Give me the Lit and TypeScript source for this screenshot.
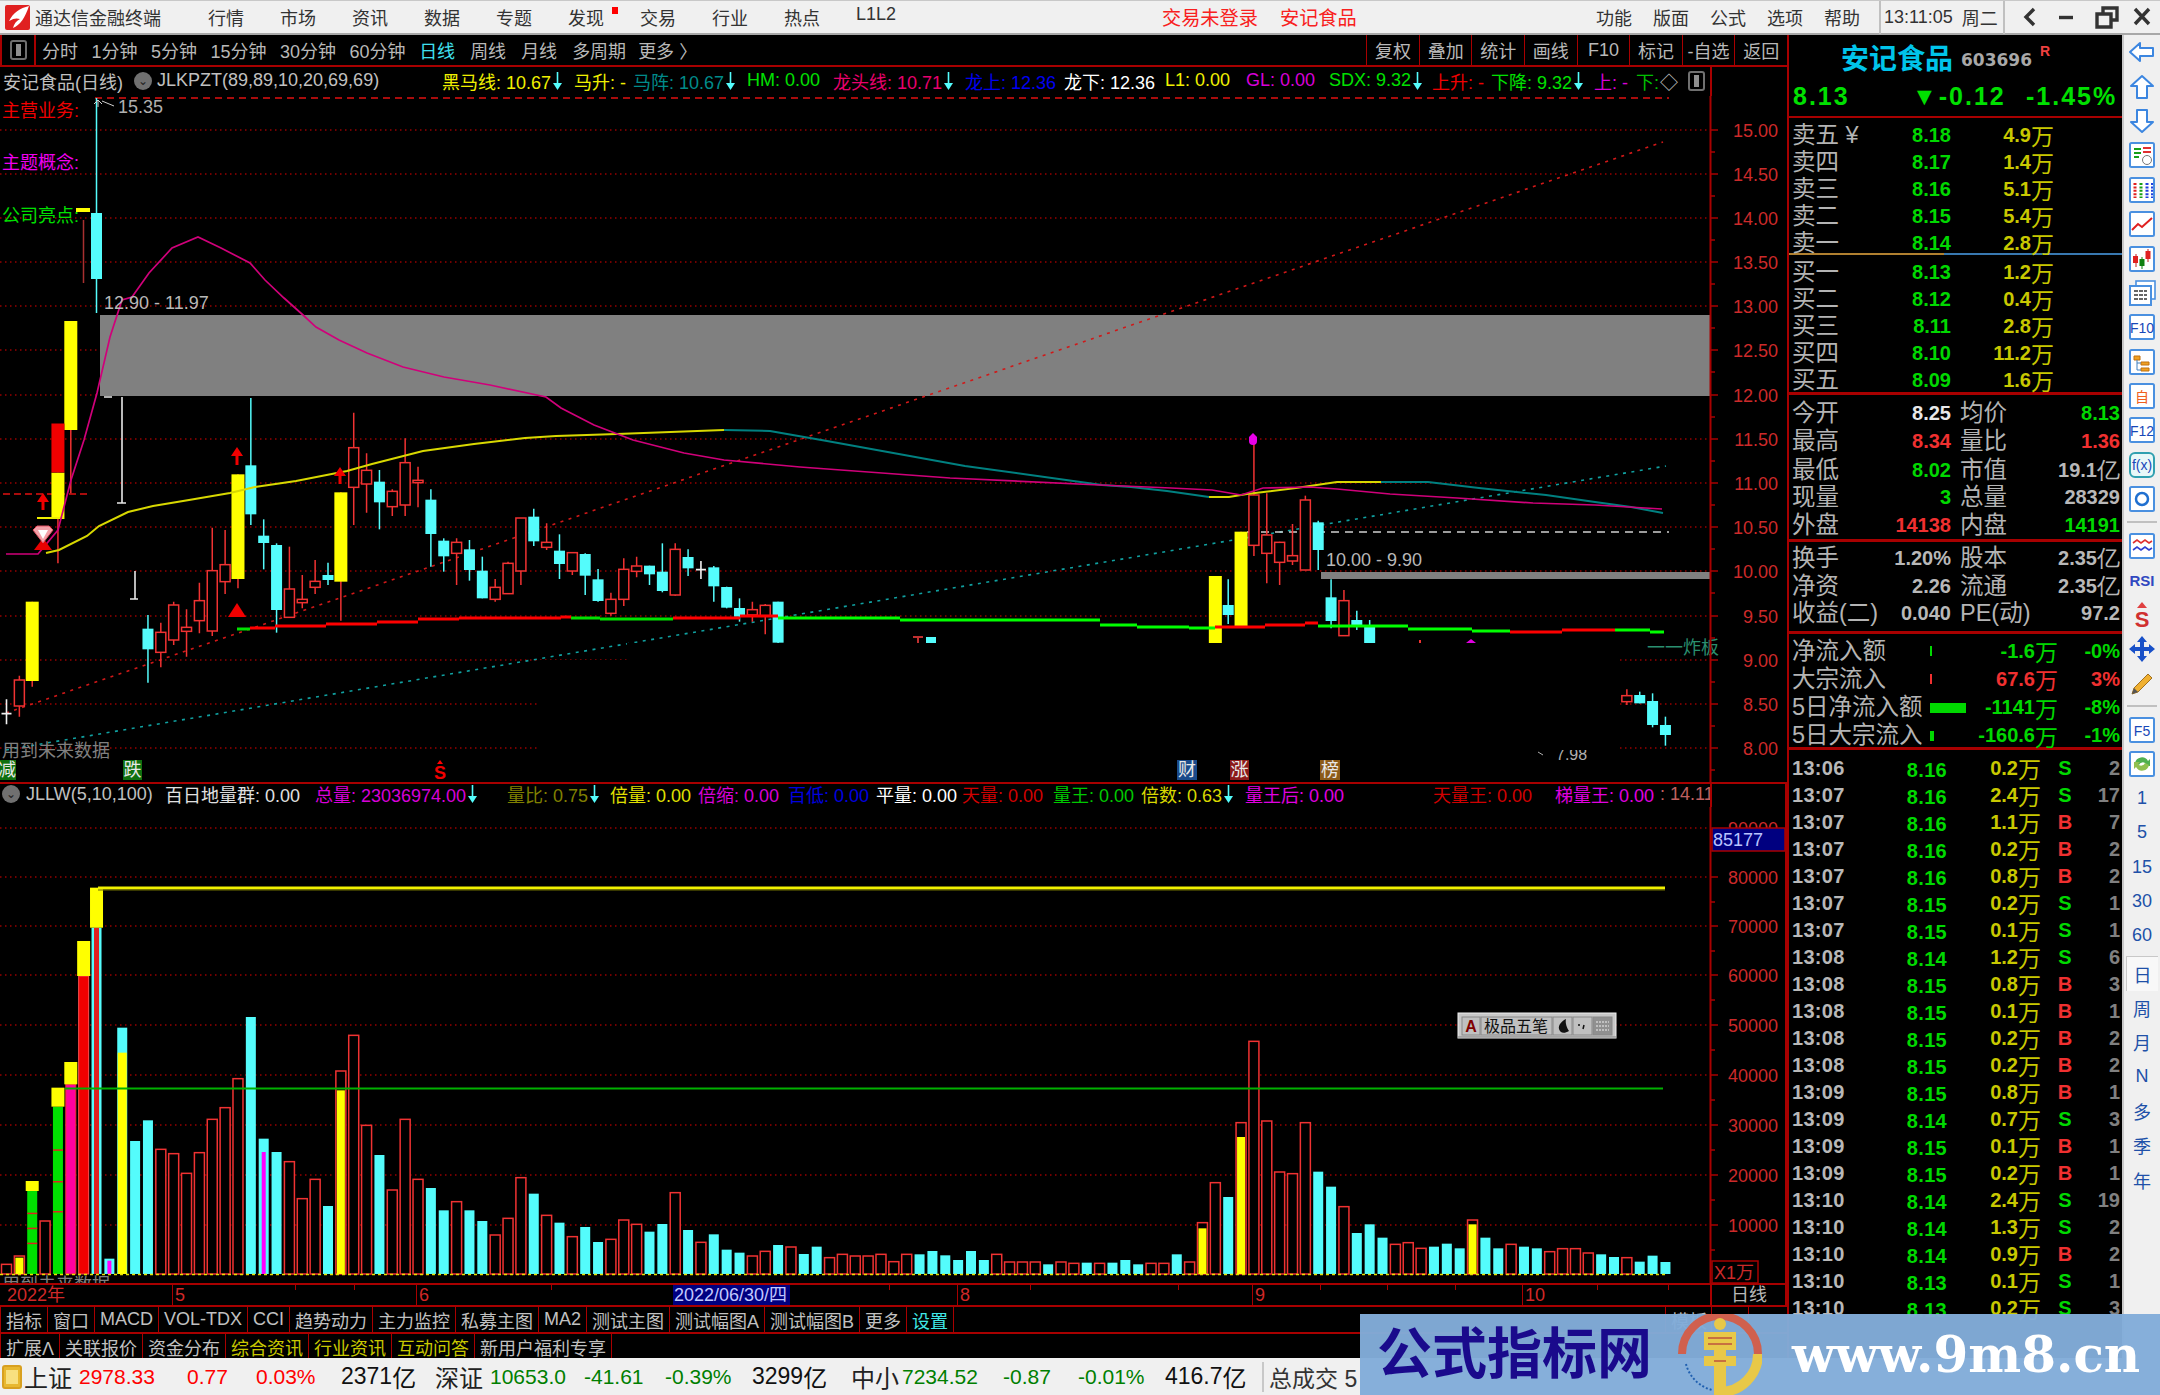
import { LitElement, html, css, svg } from "lit";
import { customElement } from "lit/decorators.js";

type Item = { x: number; t?: string; c?: string; arrow?: boolean; icon?: string; cls?: string };

const X = (i: number) => 6.5 + 12.86 * i;
const RED = "#f03232";
const CY = "#54fcfc";
const AX = "#a80000";

// [index, kind, wick top, body top, body bottom, wick bottom]  (y in zoom units, offset below)
const c5: [number, string, number, number, number, number][] = [
  [0,"w",1258,1298,1302,1333],[1,"r",1187,1200,1278,1310],[2,"y",965,965,1203,1220],[4,"y",578,578,717,850],[5,"y",123,123,450,640],
  [11,"c",1005,1046,1108,1208],[12,"r",1028,1057,1117,1162],[13,"r",965,975,1080,1095],[14,"r",988,1042,1054,1130],[15,"r",908,962,1022,1060],
  [16,"r",743,872,1053,1068],[17,"r",750,854,905,942],[18,"y",583,583,897,925],[19,"c",354,556,703,735],[20,"c",718,767,789,868],
  [21,"c",790,795,990,1058],[22,"r",800,927,1012,1012],[23,"r",885,958,968,985],[24,"r",840,904,922,942],[25,"c",848,885,900,915],
  [26,"y",637,637,905,1022],[27,"r",398,503,622,735],[28,"r",520,571,612,698],[29,"c",570,605,667,748],[30,"r",628,634,680,708],
  [31,"r",475,548,675,708],[32,"r",560,601,608,682],[33,"c",628,659,762,860],[34,"c",775,782,829,875],[35,"r",775,787,820,915],
  [36,"c",780,808,870,902],[37,"c",830,872,955,955],[38,"r",897,922,958,965],[39,"r",845,850,941,942],[40,"r",715,714,873,915],
  [41,"c",686,710,784,798],[42,"r",730,787,802,810],[43,"c",763,812,852,897],[44,"r",818,818,873,885],[45,"c",820,822,887,945],
  [46,"c",867,898,963,965],[47,"r",938,958,1000,1007],[48,"r",835,868,958,978],[49,"r",830,858,874,892],[50,"c",857,857,883,915],
  [51,"c",790,875,933,937],[52,"r",790,808,945,947],[53,"c",808,831,865,888],[54,"w",843,866,870,897],[55,"c",858,862,919,965],
  [56,"c",920,921,983,985],[57,"c",955,984,1010,1025],[58,"r",965,989,1005,1025],[59,"r",972,976,1007,1063],[60,"c",965,965,1088,1090],
];
const c6: [number, string, number, number, number, number][] = [
  [94,"y",528,528,730,730],[95,"c",538,615,645,672],[96,"y",395,395,680,680],[97,"r",117,285,436,468],[98,"r",280,405,460,550],
  [99,"r",425,427,487,555],[100,"r",372,467,483,495],[101,"r",287,300,510,510],[102,"c",362,367,450,510],[103,"c",538,592,663,685],
  [104,"r",570,602,707,707],[105,"c",632,660,675,690],[106,"c",660,680,730,730],[126,"r",868,887,905,915],[127,"c",875,885,910,910],
  [128,"c",880,903,975,982],[129,"c",950,975,1005,1037],
];
const candles = [
  ...c5.map(([i, k, a, b, d, e]) => [i, k, 280 + a / 3, 280 + b / 3, 280 + d / 3, 280 + e / 3] as [number, string, number, number, number, number]),
  ...c6.map(([i, k, a, b, d, e]) => [i, k, 400 + a / 3, 400 + b / 3, 400 + d / 3, 400 + e / 3] as [number, string, number, number, number, number]),
];

const v1 = "r1510 r1485 g1290 r1380 g1037 m970 R645 C500 c1493 c800 c1140 c1078 r1165 r1178 r1237 r1175 r1075 r1040 r953 c768 c1133 c1173 r1202 r1313 r1255 c1335 r930 r823 r1093 c1182 r1287 r1075 r1255 c1281 c1348 r1322 c1348 c1380 r1422 r1372 r1250 c1298 r1363 c1385 r1427 c1398 c1443 r1435 r1377 r1390 c1412 c1389 r1295 c1407 r1444 c1420 c1466 c1475 r1485 r1471 c1452 r1458 c1479 c1457 r1490 r1480 r1485 r1485 r1480 r1502".split(" ");
const v2 = "r1180 c1180 c1170 c1183 c1197 c1170 c1197 r1180 r1203 r1203 r1203 c1210 r1203 r1207 c1205 r1207 c1205 c1197 c1210 r1207 r1207 c1180 r1203 r1085 r965 c1008 r785 r541 r780 r933 r938 r785 c932 c977 r1037 c1116 c1090 c1130 r1150 r1145 r1162 c1157 c1148 c1162 r1077 c1130 c1162 r1150 c1157 c1162 r1172 r1163 r1163 r1176 c1180 c1188 r1190 c1202 c1184 c1203".split(" ");
const bars = [
  ...v1.map((s) => ({ k: s[0], y: 760 + +s.slice(1) / 3 })),
  ...v2.map((s) => ({ k: s[0], y: 860 + +s.slice(1) / 3 })),
];
const yFill: Record<number, number> = { 1: 760 + 1490 / 3, 26: 760 + 988 / 3, 93: 860 + 1102 / 3, 96: 860 + 828 / 3, 114: 860 + 1090 / 3, 9: 760 + 875 / 3 };
const caps: [number, number, number][] = [[2, 1260, 1290], [4, 980, 1037], [5, 903, 970], [6, 540, 645], [7, 380, 500]];

const magentaLine = "6,554 38,554 58,530 71,480 84,440 97,393 110,337 122,300 132,297 149,273 172,248 198,237 221,248 250,263 265,280 284,298 303,315 316,327 339,340 367,353 403,367 444,377 490,385 546,397 561,408 594,425 633,440 684,453 724,460 800,467 950,478 1100,485 1171,488 1212,490 1241,495 1263,488 1310,487 1337,489 1390,494 1457,498 1533,503 1595,505 1662,509";
const yellow1 = "46,553 59,550 87,536 99,526 128,512 153,506 189,500 230,493 255,487 296,481 347,471 372,464 423,451 474,444 525,438 556,436 617,434 724,430";
const teal1 = "724,430 770,431 827,441 965,466 1102,485 1131,487 1167,491 1209,497";
const yellow2 = "1209,497 1229,497 1247,494 1296,488 1337,482 1381,482";
const teal2 = "1381,482 1428,482 1479,488 1546,495 1595,502 1631,507 1663,513";
const thick: [number, number, number, string][] = [
  [237, 250, 629, "#00e000"], [250, 275, 628, "#ff0000"], [275, 326, 626, "#ff0000"], [326, 377, 624, "#ff0000"], [377, 418, 622, "#ff0000"], [418, 459, 619, "#ff0000"],
  [459, 561, 618, "#ff0000"], [561, 571, 617, "#ff0000"], [571, 600, 618, "#00e000"], [600, 673, 619, "#00e000"], [673, 740, 618, "#ff0000"], [740, 778, 616, "#ff0000"],
  [778, 900, 618, "#00ff00"], [900, 1100, 620, "#00ff00"], [1100, 1137, 625, "#00ff00"], [1137, 1189, 627, "#00ff00"], [1189, 1215, 628, "#00ff00"], [1215, 1265, 627, "#ff0000"],
  [1265, 1305, 625, "#ff0000"], [1305, 1318, 623, "#ff0000"], [1318, 1408, 626, "#00ff00"], [1408, 1472, 629, "#00ff00"], [1472, 1510, 631, "#00ff00"], [1510, 1562, 632, "#ff0000"],
  [1562, 1615, 630, "#ff0000"], [1615, 1650, 630, "#00ff00"], [1650, 1664, 632, "#00ff00"],
];
const priceGrid = [130, 174, 218, 262, 306, 350, 395, 439, 483, 527, 571, 616, 660, 704, 748];
const priceLabels = ["15.00","14.50","14.00","13.50","13.00","12.50","12.00","11.50","11.00","10.50","10.00","9.50","9.00","8.50","8.00"];
const volGrid = [876, 925, 974, 1024, 1074, 1124, 1174, 1224];

const info1: Item[] = [
  { x: 3, t: "安记食品(日线)", c: "#c0c0c0" }, { x: 134, icon: "v" }, { x: 157, t: "JLKPZT(89,89,10,20,69,69)", c: "#c0c0c0" },
  { x: 442, t: "黑马线: 10.67", c: "#f0f000", arrow: true }, { x: 574, t: "马升: -", c: "#f0f000" }, { x: 633, t: "马阵: 10.67", c: "#008b8b", arrow: true },
  { x: 747, t: "HM: 0.00", c: "#00e000" }, { x: 833, t: "龙头线: 10.71", c: "#e8006e", arrow: true }, { x: 965, t: "龙上: 12.36", c: "#0000f0" },
  { x: 1064, t: "龙下: 12.36", c: "#ffffff" }, { x: 1165, t: "L1: 0.00", c: "#f0f000" }, { x: 1246, t: "GL: 0.00", c: "#d800d8" },
  { x: 1329, t: "SDX: 9.32", c: "#00e000", arrow: true }, { x: 1432, t: "上升: -", c: "#f00000" }, { x: 1491, t: "下降: 9.32", c: "#00e000", arrow: true },
  { x: 1594, t: "上: -", c: "#d800d8" }, { x: 1636, t: "下:", c: "#00c000" }, { x: 1660, t: "◇", c: "#c0c0c0" }, { x: 1688, icon: "s" },
];
const info2: Item[] = [
  { x: 2, icon: "v" }, { x: 26, t: "JLLW(5,10,100)", c: "#c0c0c0" }, { x: 165, t: "百日地量群: 0.00", c: "#e0e0e0" },
  { x: 315, t: "总量: 23036974.00", c: "#d800d8", arrow: true }, { x: 507, t: "量比: 0.75", c: "#808000", arrow: true }, { x: 610, t: "倍量: 0.00", c: "#e0e000" },
  { x: 698, t: "倍缩: 0.00", c: "#d800d8" }, { x: 788, t: "百低: 0.00", c: "#0000e0" }, { x: 876, t: "平量: 0.00", c: "#ffffff" },
  { x: 962, t: "天量: 0.00", c: "#d00000" }, { x: 1053, t: "量王: 0.00", c: "#00c800" }, { x: 1141, t: "倍数: 0.63", c: "#d8d800", arrow: true },
  { x: 1245, t: "量王后: 0.00", c: "#e000e0" }, { x: 1433, t: "天量王: 0.00", c: "#d00000" }, { x: 1555, t: "梯量王: 0.00", c: "#e000e0" }, { x: 1660, t: ": 14.11", c: "#c06060" },
];
const status: Item[] = [
  { x: 24, t: "上证", c: "#222", cls: "big" }, { x: 79, t: "2978.33", c: "#f00" }, { x: 187, t: "0.77", c: "#f00" }, { x: 256, t: "0.03%", c: "#f00" },
  { x: 341, t: "2371", c: "#111", cls: "yi" }, { x: 435, t: "深证", c: "#222", cls: "big" }, { x: 490, t: "10653.0", c: "#007f00" }, { x: 584, t: "-41.61", c: "#007f00" },
  { x: 665, t: "-0.39%", c: "#007f00" }, { x: 752, t: "3299", c: "#111", cls: "yi" }, { x: 851, t: "中小", c: "#222", cls: "big" }, { x: 902, t: "7234.52", c: "#007f00" },
  { x: 1003, t: "-0.87", c: "#007f00" }, { x: 1078, t: "-0.01%", c: "#007f00" }, { x: 1165, t: "416.7", c: "#111", cls: "yi" },
];

const sell = [["卖五 ¥","8.18","4.9"],["卖四","8.17","1.4"],["卖三","8.16","5.1"],["卖二","8.15","5.4"],["卖一","8.14","2.8"]];
const buy = [["买一","8.13","1.2"],["买二","8.12","0.4"],["买三","8.11","2.8"],["买四","8.10","11.2"],["买五","8.09","1.6"]];
const G = "#00d800", R2 = "#f03030", W = "#e8e8e8", GY = "#b8b8b8";
const stats: [string, string, string, string, string, string][] = [
  ["今开","8.25",W,"均价","8.13",G],["最高","8.34",R2,"量比","1.36",R2],["最低","8.02",G,"市值","19.1亿",GY],["现量","3",G,"总量","28329",GY],["外盘","14138",R2,"内盘","14191",G],
];
const stats2: [string, string, string, string, string, string][] = [
  ["换手","1.20%",GY,"股本","2.35亿",GY],["净资","2.26",GY,"流通","2.35亿",GY],["收益(二)","0.040",GY,"PE(动)","97.2",GY],
];
const flows: [string, number, string, string, string][] = [
  ["净流入额",2,G,"-1.6","-0%"],["大宗流入",2,R2,"67.6","3%"],["5日净流入额",36,G,"-1141","-8%"],["5日大宗流入",4,G,"-160.6","-1%"],
];
const ticks = `13:06 8.16 0.2 S 2|13:07 8.16 2.4 S 17|13:07 8.16 1.1 B 7|13:07 8.16 0.2 B 2|13:07 8.16 0.8 B 2|13:07 8.15 0.2 S 1|13:07 8.15 0.1 S 1|13:08 8.14 1.2 S 6|13:08 8.15 0.8 B 3|13:08 8.15 0.1 B 1|13:08 8.15 0.2 B 2|13:08 8.15 0.2 B 2|13:09 8.15 0.8 B 1|13:09 8.14 0.7 S 3|13:09 8.15 0.1 B 1|13:09 8.15 0.2 B 1|13:10 8.14 2.4 S 19|13:10 8.14 1.3 S 2|13:10 8.14 0.9 B 2|13:10 8.13 0.1 S 1|13:10 8.13 0.2 S 3`.split("|").map((r) => r.split(" "));

const timeline: [number, string, string][] = [[0,"2022年","first"],[172,"5",""],[416,"6",""],[673,"2022/06/30/四","sel"],[790,"","none"],[957,"8",""],[1252,"9",""],[1522,"10",""],[1710,"日线","ax"]];
const tlTicks = [295, 354, 551, 889, 1030, 1178, 1320, 1387, 1455, 1597, 1668];
const btn1 = ["指标","窗口","MACD","VOL-TDX","CCI","趋势动力","主力监控","私募主图","MA2","测试主图","测试幅图A","测试幅图B","更多","设置"];
const btn2: [string, string][] = [["扩展Λ",""],["关联报价",""],["资金分布",""],["综合资讯","yl"],["行业资讯","yl"],["互动问答","yl"],["新用户福利专享",""]];
const menus = ["行情","市场","资讯","数据","专题","发现","交易","行业","热点","L1L2"];
const sideText = ["1","5","15","30","60"];
const sideText2 = ["周","月","N","多","季","年"];

const box = (inner: unknown) => svg`<rect x="3" y="2" width="24" height="24" rx="1.5" fill="#fff" stroke="#4a90e0" stroke-width="2"/>${inner}`;
const arr = (d: string) => svg`<path d=${d} fill="#fff" stroke="#3c86e0" stroke-width="2" stroke-linejoin="round"/>`;
const icons = [
  arr("M3 14 L13 5 V10 H26 V18 H13 V23 Z"),
  arr("M15 3 L26 13 H20 V25 H10 V13 H4 Z"),
  arr("M15 25 L26 15 H20 V3 H10 V15 H4 Z"),
  box(svg`<path d="M7 8h7M7 12h7M7 16h5" stroke="#18a018" stroke-width="2"/><path d="M16 7h8M16 11h8" stroke="#e03030" stroke-width="2"/><circle cx="20" cy="19" r="4.5" fill="#fff" stroke="#777"/>`),
  box(svg`<path d="M8 7v15" stroke="#e02020" stroke-width="3" stroke-dasharray="2 1.4"/><path d="M14 7v15" stroke="#18a018" stroke-width="3" stroke-dasharray="2 1.4"/><path d="M20 7v15" stroke="#2040e0" stroke-width="3" stroke-dasharray="2 1.4"/><path d="M25 7v15" stroke="#2040e0" stroke-width="2" stroke-dasharray="2 1.4"/>`),
  box(svg`<path d="M5 20 L11 14 L15 17 L25 8" fill="none" stroke="#e02020" stroke-width="2"/>`),
  box(svg`<path d="M9 9v13" stroke="#c02020"/><rect x="6" y="11" width="5" height="7" fill="#e02020"/><path d="M15 12v12" stroke="#108010"/><rect x="12.5" y="14" width="5" height="7" fill="#108010"/><path d="M21 4v13" stroke="#c02020"/><rect x="18.5" y="6" width="5" height="8" fill="#e02020"/>`),
  svg`<rect x="9" y="2" width="19" height="18" fill="#fff" stroke="#4a90e0" stroke-width="1.6"/><rect x="3" y="7" width="21" height="19" fill="#fff" stroke="#4a90e0" stroke-width="2"/><path d="M7 12h13M7 16h13M7 20h13" stroke="#666" stroke-width="2" stroke-dasharray="4 1"/>`,
  box(svg`<text x="15" y="20" text-anchor="middle" class="ico" fill="#1848b8">F10</text>`),
  box(svg`<path d="M7 8h6v4H7zM14 14h8v3h-8zM14 20h8v3h-8z" fill="#f0a020" stroke="#c07010"/><path d="M10 12v10h4M10 15h4" fill="none" stroke="#4080c0"/>`),
  box(svg`<text x="15" y="20" text-anchor="middle" class="ico" fill="#f06020">自</text>`),
  box(svg`<text x="15" y="20" text-anchor="middle" class="ico" fill="#1848b8">F12</text>`),
  svg`<rect x="3" y="2" width="24" height="24" rx="5" fill="#e8f8f8" stroke="#30a0b0" stroke-width="2"/><text x="15" y="19" text-anchor="middle" class="ico" fill="#1848b8">f(x)</text>`,
  box(svg`<circle cx="15" cy="14" r="6" fill="none" stroke="#2070d0" stroke-width="2.5"/>`),
];
const icons2 = [
  box(svg`<path d="M6 11l4-3 4 3 4-3 4 3 3-2" fill="none" stroke="#e03030" stroke-width="1.6"/><path d="M6 18l4-3 4 3 4-3 4 3 3-2" fill="none" stroke="#3040d0" stroke-width="1.6"/>`),
  svg`<text x="15" y="20" text-anchor="middle" class="rsi" fill="#3048c0">RSI</text>`,
  svg`<path d="M15 2l5 6h-10z" fill="#e04040"/><text x="15" y="27" text-anchor="middle" class="sico" fill="#d03030">S</text>`,
  svg`<path d="M15 1l5 6h-3v5h5v-3l6 5-6 5v-3h-5v5h3l-5 6-5-6h3v-5H8v3l-6-5 6-5v3h5V7h-3z" fill="#1850c8"/>`,
  svg`<path d="M7 19L21 5l4 4L11 23l-6 2z" fill="#f0b030" stroke="#a07020"/><path d="M5 25l2-6 4 4z" fill="#555"/>`,
];
const icons3 = [
  box(svg`<text x="15" y="20" text-anchor="middle" class="ico" fill="#1848b8">F5</text>`),
  box(svg`<path d="M8 13a7 7 0 0 1 13-2l2-2v7h-6l2-2a4 4 0 0 0-7 1z" fill="#50b050"/><path d="M22 15a7 7 0 0 1-13 2l-2 2v-7h6l-2 2a4 4 0 0 0 7-1z" fill="#90c050"/>`),
];

const upArrow = (x: number, y1: number, y2: number) => svg`<path d="M${x} ${y1} l6 9 h-4.5 v${y2 - y1 - 9} h-3 v-${y2 - y1 - 9} h-4.5 z" fill="#f00000"/>`;
const tag = (x: number, w: number, txt: string, fill: string, tc = "#e8e8e8") => svg`<rect x=${x} y="760" width=${w} height="20" fill=${fill}/><text x=${x + w / 2} y="776" text-anchor="middle" class="t" fill=${tc}>${txt}</text>`;

@customElement("app-root")
export class AppRoot extends LitElement {
  static styles = css`
    :host { display: block; width: 2160px; height: 1395px; overflow: hidden; position: relative; background: #000;
      font-family: "Liberation Sans", "Noto Sans CJK SC", sans-serif; font-size: 18px; }
    * { box-sizing: border-box; }
    .title { height: 35px; background: #f0f0f0; border-top: 1px solid #c8c8c8; border-bottom: 2px solid #a8a8a8; display: flex; align-items: center; color: #333; }
    .logo { width: 25px; height: 25px; margin-left: 5px; flex: none; }
    .appname { margin-left: 5px; width: 126px; flex: none; white-space: nowrap; }
    .menus { display: flex; margin-left: 47px; flex: none; }
    .menus span { width: 72px; position: relative; }
    .menus .dot::after { content: ""; position: absolute; left: 44px; top: 3px; width: 6px; height: 7px; background: #f00; }
    .login { margin-left: 234px; color: #f82020; font-size: 19.2px; width: 118px; flex: none; white-space: nowrap; }
    .stock { color: #f82020; font-size: 19.2px; width: 316px; flex: none; white-space: nowrap; }
    .rmenus { display: flex; gap: 21px; flex: none; width: 283px; }
    .clock { height: 33px; border-left: 2px solid #c0c0c0; border-right: 2px solid #c0c0c0; width: 126px; flex: none; display: flex; align-items: center; padding-left: 3px; gap: 9px; white-space: nowrap; }
    .win { width: 155px; flex: none; height: 33px; }
    .main { display: flex; height: 1323px; }
    .left { width: 1787px; flex: none; display: flex; flex-direction: column; }
    .tools { height: 32px; flex: none; display: flex; align-items: center; border-bottom: 2px solid #a80000; color: #b8b8b8; white-space: nowrap; }
    .tools .ibox { width: 36px; height: 30px; border-left: 2px solid #a80000; border-right: 2px solid #a80000; display: flex; align-items: center; justify-content: center; flex: none; }
    .grp { display: flex; gap: 13.5px; margin-left: 6px; }
    .grp2 { display: flex; gap: 15px; margin-left: 15px; }
    .grp2 .on, .grp .on { color: #40e0f0; }
    .more { margin-left: 12px; }
    .spacer { flex: 1; }
    .tcell { width: 52.6px; height: 30px; border-left: 1.5px solid #a80000; display: flex; align-items: center; justify-content: center; flex: none; white-space: nowrap; }
    .info { display: flex; align-items: center; flex: none; white-space: nowrap; overflow: hidden; }
    .info .cells { width: 1710px; flex: none; display: flex; align-items: center; overflow: hidden; }
    .info .stub { width: 77px; flex: none; align-self: stretch; border-left: 2px solid #a80000; }
    .i1 { height: 29px; padding-bottom: 2px; }
    .i1 .stub { margin-bottom: -2px; }
    .i2 { height: 25px; border-top: 2px solid #a80000; padding-bottom: 3px; }
    .i2 .stub { border-right: 2px solid #a80000; margin-bottom: -3px; }
    .cell { display: inline-flex; align-items: center; flex: none; white-space: nowrap; }
    .chev { width: 18px; height: 18px; border-radius: 50%; background: #707070; color: #222; display: flex; align-items: center; justify-content: center; font-size: 12px; }
    .chip { width: 17px; height: 20px; border: 2px solid #707070; border-radius: 3px; display: block; position: relative; }
    .chip::after { content: ""; position: absolute; left: 4px; top: 2px; bottom: 2px; width: 5px; background: #909090; }
    svg.chart { display: block; flex: none; }
    svg.chart .t { font-size: 18px; font-family: "Liberation Sans", "Noto Sans CJK SC", sans-serif; }
    svg.chart .s { font-size: 16px; font-family: "Liberation Sans", "Noto Sans CJK SC", sans-serif; }
    svg.chart .a { font-size: 18px; font-family: "Liberation Sans", sans-serif; text-anchor: end; }
    .tl { height: 24px; flex: none; display: flex; position: relative; border-top: 2px solid #a80000; border-bottom: 2px solid #a80000; color: #d02828; line-height: 21px; }
    .tl > span { flex: none; border-left: 1.5px solid #a80000; padding-left: 2px; white-space: nowrap; }
    .tl .first { padding-left: 7px; border-left: 0; }
    .tl .none { border-left: 0; }
    .tl .sel { background: #000080; color: #c0c8ff; border-left: 0; padding-left: 1px; }
    .tl .ax { color: #b8b8b8; padding-left: 19px; border-right: 2px solid #a80000; border-left-width: 2px; }
    .tl i { position: absolute; top: 0; width: 1px; height: 5px; background: #a80000; }
    .btns { display: flex; flex: none; height: 27px; border-bottom: 2px solid #a80000; color: #c0c0c0; align-items: stretch; }
    .btns span { padding: 0 5px; border-left: 1.5px solid #a80000; display: flex; align-items: center; white-space: nowrap; flex: none; }
    .btns .cy { color: #40e8e8; }
    .btns .yl { color: #c8c800; }
    .btns .spacer { flex: 1; border-left: 1.5px solid #a80000; }
    .btns .w1 { width: 46px; }
    .btns .w2 { width: 37px; }
    .btns .w3 { width: 39px; }
    .panel { width: 335px; flex: none; border-left: 2px solid #a80000; background: #000; color: #bbb; overflow: hidden; }
    .phead { height: 43px; display: flex; align-items: center; padding-left: 52px; }
    .pname { font-size: 28px; font-weight: 700; color: #00c4ea; }
    .pcode { font-family: "DejaVu Sans", sans-serif; font-size: 17px; font-weight: 700; color: #a8a8a8; margin-left: 8px; margin-top: 6px; }
    .pr { font-size: 14px; font-weight: 700; color: #f04040; margin-left: 8px; margin-top: -12px; }
    .pprice { height: 40px; display: grid; grid-template-columns: 119px 114px 1fr; align-items: center; padding-left: 4px; border-bottom: 2px solid #a80000; color: #00e000; font-weight: 700; font-size: 25px; letter-spacing: 2px; white-space: nowrap; padding-bottom: 2px; }
    .sec { padding-left: 3px; }
    .row { height: 27px; display: grid; align-items: center; white-space: nowrap; }
    .book { grid-template-columns: 119px 40px 103px; }
    .lb { font-size: 23.5px; color: #b4b4b4; line-height: 27px; }
    .num { font-size: 20px; font-weight: 700; text-align: right; font-family: "Liberation Sans", sans-serif; }
    .vol { font-size: 20px; font-weight: 700; text-align: right; color: #c8c800; display: flex; justify-content: flex-end; align-items: center; }
    .wan { font-size: 23px; font-weight: 400; }
    .mid { height: 2px; background: linear-gradient(90deg, #b08030 0 155px, #3878b0 155px); margin-left: -3px; }
    .lineb { height: 3px; background: #a80000; margin-left: -3px; }
    .lb1 { margin-top: 2px; margin-bottom: 4px; }
    .lb2 { margin-bottom: 1px; }
    .lb3 { margin-top: 4px; }
    .lb4 { margin-bottom: 1px; }
    .st { grid-template-columns: 159px 160px; column-gap: 9px; height: 28px; }
    .pair { display: flex; justify-content: space-between; align-items: center; }
    .pair .num { display: flex; align-items: center; }
    .yi { font-size: 23px; font-weight: 400; }
    .fl { grid-template-columns: 138px 38px 90px 62px; height: 28.3px; }
    .fl .vol { font-size: 20px; }
    .fl i { display: block; height: 10px; }
    .tk { grid-template-columns: 155px 94px 48px 31px; }
    .tk .t0 { font-size: 20px; font-weight: 700; color: #b8b8b8; letter-spacing: .3px; position: relative; }
    .tk .t0 b { position: absolute; right: 0; top: 0; font-size: 20px; color: #00d800; line-height: 27px; }
    .tk .bs { text-align: center; font-size: 20px; font-weight: 700; }
    .tk .ct { text-align: right; font-size: 20px; font-weight: 700; color: #808080; }
    .side { width: 38px; flex: none; background: #f0f0f0; border-left: 2px solid #c8c8c8; display: flex; flex-direction: column; align-items: center; overflow: hidden; }
    .side .it { height: 34.4px; flex: none; display: flex; align-items: center; justify-content: center; color: #2050a8; }
    .side .sep { height: 12px; width: 30px; flex: none; position: relative; }
    .side .sep::after { content: ""; position: absolute; left: 0; right: 0; top: 5px; height: 2px; background: #c0c0c0; }
    .side .ds { margin-top: 3px; background: #f8f8f8; border-left: 1px solid #c8c8c8; border-top: 1px solid #c8c8c8; width: 32px; }
    .side svg text.ico { font-family: "Liberation Sans", "Noto Sans CJK SC", sans-serif; font-size: 14px; }
    .side svg text.rsi { font-family: "Liberation Sans", sans-serif; font-size: 15px; font-weight: 700; }
    .side svg text.sico { font-family: "Liberation Sans", sans-serif; font-size: 22px; font-weight: 700; }
    .statusbar { height: 37px; background: #f0f0f0; display: flex; align-items: center; white-space: nowrap; font-size: 21px; position: relative; }
    .statusbar .big { font-size: 24px; }
    .statusbar .badge { width: 20px; height: 24px; margin-left: 2px; margin-right: 2px; flex: none; background: #e8b830; border: 2px solid #d8a020; border-radius: 3px; position: relative; }
    .statusbar .badge::after { content: ""; position: absolute; inset: 3px 2px; background: #f8e080; }
    .statusbar .tot { border-left: 2px solid #c8c8c8; padding-left: 5px; font-size: 23px; color: #333; height: 30px; display: flex; align-items: center; }
    .wm { position: absolute; left: 1360px; top: 1314px; width: 800px; height: 81px; background: rgba(130,172,217,.97); display: flex; align-items: center; overflow: hidden; }
    .wm .cn { font-size: 55px; font-weight: 700; color: #1a0a8c; margin-left: 17px; white-space: nowrap; line-height: 1; flex: none; width: 277px; }
    .wm svg { flex: none; margin-left: 24px; }
    .wm .en { font-family: "DejaVu Serif", serif; font-weight: 700; font-size: 50px; color: #fff; margin-left: 30px; white-space: nowrap; flex: none; line-height: 1; }
  `;

  private cells(items: Item[], end: number, start = 0) {
    return items.map((it, i) => {
      const next = i + 1 < items.length ? items[i + 1].x : end;
      const ml = i > 0 ? 0 : it.x - start;
      return html`<span class="cell ${it.cls ?? ""}" style="width:${next - it.x}px;margin-left:${ml}px;color:${it.c ?? "inherit"}">
        ${it.icon === "v" ? html`<span class="chev">⌄</span>` : it.icon === "s" ? html`<span class="chip"></span>` : it.t}
        ${it.arrow ? html`<svg width="11" height="20" viewBox="0 0 11 20" style="margin-left:1px"><path d="M5.5 1v13" stroke="#54fcfc" stroke-width="1.6"/><path d="M1 12h9l-4.5 7z" fill="#54fcfc"/></svg>` : ""}
        ${it.cls === "yi" ? html`<span style="font-size:24px">亿</span>` : ""}
      </span>`;
    });
  }

  private candle(i: number, k: string, a: number, b: number, d: number, e: number) {
    const x = X(i);
    if (k === "y") {
      return svg`<path d="M${x} ${a}V${e}" stroke=${RED} stroke-width="1.5"/><rect x=${x - 6.5} y=${b} width="13" height=${d - b} fill="#ffff00"/>`;
    }
    if (k === "w") {
      return svg`<path d="M${x} ${a}V${e}M${x - 5} ${b + 1}H${x + 5}" stroke="#f0f0f0" stroke-width="1.6"/>`;
    }
    if (k === "c") {
      return svg`<path d="M${x} ${a}V${e}" stroke=${CY} stroke-width="1.5"/><rect x=${x - 5.5} y=${b} width="11" height=${d - b} fill=${CY}/>`;
    }
    return svg`<path d="M${x} ${a}V${b}M${x} ${d}V${e}" stroke=${RED} stroke-width="1.5"/><rect x=${x - 5} y=${b} width="10" height=${d - b} fill="#000" stroke=${RED} stroke-width="1.5"/>`;
  }

  private priceChart() {
    return html`<svg class="chart" width="1787" height="686" viewBox="0 96 1787 686">
      ${priceGrid.map((y) => svg`<path d="M0 ${y}H1710" stroke="#960000" stroke-width="1.5" stroke-dasharray="1.5 3.5"/>`)}
      <path d="M95 98H1669" stroke="#e01010" stroke-width="1.6" stroke-dasharray="7 5"/>
      <rect x="100" y="315" width="1610" height="81" fill="#808080"/>
      <rect x="1321" y="572" width="389" height="7" fill="#808080"/>
      <path d="M6 713L1663 142" stroke="#d01818" stroke-width="1.6" stroke-dasharray="3 5.5"/>
      <path d="M6 750L1666 466" stroke="#10a0a0" stroke-width="1.6" stroke-dasharray="3 5.5"/>
      <path d="M1247 532H1669" stroke="#d0d0d0" stroke-width="1.6" stroke-dasharray="8 6"/>
      <path d="M3 494H88" stroke="#e01010" stroke-width="1.5" stroke-dasharray="7 4"/>
      ${candles.map(([i, k, a, b, d, e]) => this.candle(i, k, a, b, d, e))}
      <rect x=${X(4) - 6.5} y="423.5" width="13" height="49" fill="#f00000"/>
      <path d="M96.5 98V313" stroke=${CY} stroke-width="1.5"/>
      <rect x="91" y="213" width="11" height="66" fill=${CY}/>
      <path d="M83.5 220V283" stroke="#a83030" stroke-width="1.5"/>
      <rect x="76" y="208" width="14" height="4" fill="#ffff00"/>
      <path d="M37 518H64" stroke="#f0f000" stroke-width="2"/>
      <path d="M104 397H112M122 397V503M117 503H126M135 571V599M130 599H138" stroke="#e8e8e8" stroke-width="1.6"/>
      <polyline points=${yellow1} fill="none" stroke="#d8d800" stroke-width="2"/>
      <polyline points=${teal1} fill="none" stroke="#008080" stroke-width="2"/>
      <polyline points=${yellow2} fill="none" stroke="#d8d800" stroke-width="2"/>
      <polyline points=${teal2} fill="none" stroke="#008080" stroke-width="2"/>
      <polyline points=${magentaLine} fill="none" stroke="#d0007a" stroke-width="1.7"/>
      ${thick.map(([a, b, y, c]) => svg`<path d="M${a} ${y}H${b}" stroke=${c} stroke-width="3"/>`)}
      <rect x="538" y="660" width="1082" height="98" fill="#000"/>
      <rect x="627" y="643" width="993" height="17" fill="#000"/>
      <path d="M918 637v6M913 637h10M932 637v6" stroke="#c03030" stroke-width="2"/>
      <rect x="926" y="637" width="10" height="6" fill=${CY}/><path d="M1466 643l5-4 5 4z" fill="#e000e0"/><path d="M1420 640v3" stroke=${RED} stroke-width="2"/>
      ${upArrow(43, 493, 510)}
      <path d="M34 550l9-12 9 12z" fill="#e80000"/>
      <path d="M33 530l4-4h12l4 4-10 13z" fill="#f4a0a8" stroke="#e05060"/><path d="M38 530h10l-5 9z" fill="#fff"/>
      ${upArrow(237, 447, 465)}
      <path d="M228 617l9-14 9 14z" fill="#f00000"/>
      ${upArrow(340, 467, 484)}
      <path d="M1253 433l4 4v4a4 4 0 0 1-8 0v-4z" fill="#e800e8"/>
      <path d="M98 107V100M98 100l4 4M98 100l-4 4M102 101l12 5" fill="none" stroke="#d0d0d0"/>
      <text x="118" y="113" class="t" fill="#b0b0b0">15.35</text>
      <text x="104" y="309" class="t" fill="#b8b8b8">12.90 - 11.97</text>
      <text x="1326" y="566" class="t" fill="#b8b8b8">10.00 - 9.90</text>
      <text x="1647" y="654" class="t" fill="#2a9070">一一炸板</text>
      <text x="2" y="117" class="t" fill="#f00000">主营业务:</text>
      <text x="2" y="169" class="t" fill="#f000f0">主题概念:</text>
      <text x="2" y="222" class="t" fill="#00e000">公司亮点:</text>
      <text x="2" y="757" class="t" fill="#808080">用到未来数据</text>
      ${tag(-2, 18, "减", "#107010")}${tag(123, 19, "跌", "#107010")}
      <path d="M440 760l3 4h-6z" fill="#f00"/><text x="440" y="779" text-anchor="middle" class="t" fill="#f00000" font-weight="700">S</text>
      ${tag(1177, 20, "财", "#1a4a8a")}${tag(1230, 19, "涨", "#8c1a1a")}${tag(1320, 20, "榜", "#8c5a18")}
      <text x="1556" y="760" class="s" fill="#b0b0b0">7.98</text><path d="M1538 752l5 3" stroke="#b0b0b0"/>
      <rect x="1535" y="735" width="85" height="15" fill="#000"/>
      <path d="M1710.5 96V782" stroke=${AX} stroke-width="2"/>
      ${priceGrid.map((y, i) => svg`<path d="M1711 ${y}h7M1711 ${y + 22}h4" stroke=${AX} stroke-width="1.5"/><text x="1778" y=${y + 7} class="a" fill="#cc2a2a">${priceLabels[i]}</text>`)}
    </svg>`;
  }

  private volChart() {
    const base = 1273;
    return html`<svg class="chart" width="1787" height="476" viewBox="0 806 1787 476">
      ${[827, ...volGrid].map((y) => svg`<path d="M0 ${y}H1710" stroke="#960000" stroke-width="1.5" stroke-dasharray="1.5 3.5"/>`)}
      <text x="2" y="1290" class="t" fill="#808080">用到未来数据</text>
      ${bars.map((b, i) => {
        const x = X(i);
        const h = base - b.y;
        const fill = yFill[i];
        if (b.k === "c") {
          return svg`<rect x=${x - 5} y=${b.y} width="10" height=${h} fill=${CY}/>
            ${i === 9 ? svg`<rect x=${x - 4.5} y=${fill} width="9" height=${base - fill} fill="#ffff00"/>` : ""}
            ${i === 8 ? svg`<rect x=${x - 2} y=${b.y + 2} width="4" height=${h - 2} fill="#ff00ff"/>` : ""}
            ${i === 20 ? svg`<rect x=${x - 2} y=${760 + 1173 / 3} width="4" height=${base - 760 - 1173 / 3} fill="#ff00ff"/>` : ""}`;
        }
        if (b.k === "r") {
          return svg`<rect x=${x - 5} y=${b.y} width="10" height=${h} fill="#000" stroke=${RED} stroke-width="1.5"/>
            ${fill ? svg`<rect x=${x - 4} y=${fill} width="8" height=${base - fill} fill="#ffff00"/>` : ""}`;
        }
        if (b.k === "g") {
          const t = i === 2 ? [1355, 1400, 1445] : [1165, 1260, 1350];
          return svg`<rect x=${x - 5} y=${b.y} width="10" height=${h} fill="#00e000"/>${t.map((z) => svg`<rect x=${x - 5} y=${760 + z / 3} width="10" height="1.5" fill="#e02020"/>`)}`;
        }
        if (b.k === "m") return svg`<rect x=${x - 5} y=${b.y} width="10" height=${h} fill="#ff00a0" stroke=${RED} stroke-width="1"/>`;
        if (b.k === "R") return svg`<rect x=${x - 5} y=${b.y} width="10" height=${h} fill="#f00000" stroke="#ff5050"/>`;
        return svg`<rect x=${x - 5} y=${b.y} width="10" height=${h} fill=${CY}/><rect x=${x - 2.5} y=${b.y} width="5" height=${h} fill="#e02020"/>`;
      })}
      ${caps.map(([i, a, b]) => svg`<rect x=${X(i) - 6.5} y=${760 + a / 3} width="13" height=${(b - a) / 3} fill="#ffff00"/>`)}
      <rect x="98" y="885.5" width="1567" height="3" fill="#f0f000"/><path d="M98 889H1665" stroke="#707000"/>
      <path d="M65 1087.5H1663" stroke="#00b000" stroke-width="2"/>
      <path d="M0 1273.5H1668" stroke="#e8e000" stroke-width="1.5" stroke-dasharray="3 3"/>
      <path d="M1710.5 806V1282" stroke=${AX} stroke-width="2"/><path d="M1786 806V1282" stroke=${AX} stroke-width="2"/>
      ${volGrid.map((y, i) => svg`<path d="M1711 ${y}h7M1711 ${y + 25}h4" stroke=${AX} stroke-width="1.5"/><text x="1778" y=${y + 7} class="a" fill="#cc2a2a">${(80000 - i * 10000).toString()}</text>`)}
      <text x="1778" y="834" class="a" fill="#cc2a2a">90000</text>
      <rect x="1712" y="827" width="73" height="23" fill="#000080" stroke=${AX} stroke-width="1.5"/>
      <text x="1713" y="845" class="t" fill="#b8c4ff">85177</text>
      <rect x="1712" y="1260" width="46" height="22" fill="#000" stroke=${AX} stroke-width="1.5"/>
      <text x="1714" y="1278" class="t" fill="#cc2a2a">X1万</text>
      <rect x="1458" y="1012" width="158" height="25" fill="#c8c8c8" stroke="#f0f0f0"/>
      <path d="M1458 1036H1616" stroke="#808080"/>
      <rect x="1462" y="1016" width="18" height="18" fill="#c0c0c0" stroke="#888"/><text x="1471" y="1031" text-anchor="middle" class="s" fill="#800000" font-weight="700">A</text>
      <rect x="1481" y="1016" width="71" height="18" fill="#c0c0c0" stroke="#888"/><text x="1484" y="1031" class="s" fill="#111">极品五笔</text>
      <rect x="1553" y="1016" width="19" height="18" fill="#c0c0c0" stroke="#888"/><path d="M1566 1018c-1 4 1 9 3 12-5 3-9 2-10-2-1-4 3-8 7-10z" fill="#111"/>
      <rect x="1573" y="1016" width="19" height="18" fill="#c0c0c0" stroke="#888"/><path d="M1579 1023v2M1584 1024l-1 4" stroke="#111" stroke-width="1.5"/>
      <rect x="1593" y="1016" width="19" height="18" fill="#909090" stroke="#888"/><path d="M1596 1021h13M1596 1025h13M1596 1029h13" stroke="#f0f0f0" stroke-dasharray="2 1"/>
    </svg>`;
  }

  private side() {
    const ic = (t: unknown) => html`<div class="it"><svg width="30" height="28" viewBox="0 0 30 28">${t}</svg></div>`;
    return html`<div class="side">
      ${icons.map(ic)}
      <div class="sep"></div>
      ${icons2.map(ic)}
      <div class="sep"></div>
      ${icons3.map(ic)}
      ${sideText.map((t) => html`<div class="it">${t}</div>`)}
      <div class="it ds">日</div>
      ${sideText2.map((t) => html`<div class="it">${t}</div>`)}
    </div>`;
  }

  private panel() {
    const book = (r: string[]) => html`<div class="row book"><span class="lb">${r[0]}</span><span class="num" style="color:${G}">${r[1]}</span><span class="vol">${r[2]}<span class="wan">万</span></span></div>`;
    const val = (s: string, c: string) => s.endsWith("亿")
      ? html`<span class="num" style="color:${c}">${s.slice(0, -1)}<span class="yi">亿</span></span>`
      : html`<span class="num" style="color:${c}">${s}</span>`;
    const st = (r: [string, string, string, string, string, string]) => html`<div class="row st">
      <span class="pair"><span class="lb">${r[0]}</span>${val(r[1], r[2])}</span>
      <span class="pair"><span class="lb">${r[3]}</span>${val(r[4], r[5])}</span></div>`;
    return html`<div class="panel">
      <div class="phead"><span class="pname">安记食品</span><span class="pcode">603696</span><span class="pr">R</span></div>
      <div class="pprice"><span>8.13</span><span>▼-0.12</span><span>-1.45%</span></div>
      <div class="sec">
        ${sell.map(book)}
        <div class="mid"></div>
        ${buy.map(book)}
        <div class="lineb lb1"></div>
        ${stats.map(st)}
        <div class="lineb lb2"></div>
        ${stats2.map(st)}
        <div class="lineb lb3"></div>
        ${flows.map((f) => html`<div class="row fl"><span class="lb">${f[0]}</span><span><i style="width:${f[1]}px;background:${f[2]}"></i></span>
          <span class="vol" style="color:${f[2]}">${f[3]}<span class="wan">万</span></span><span class="num" style="color:${f[2]}">${f[4]}</span></div>`)}
        <div class="lineb lb4"></div>
        ${ticks.map((r) => html`<div class="row tk"><span class="t0">${r[0]}<b>${r[1]}</b></span><span class="vol">${r[2]}<span class="wan">万</span></span>
          <span class="bs" style="color:${r[3] === "B" ? R2 : G}">${r[3]}</span><span class="ct">${r[4]}</span></div>`)}
      </div>
    </div>`;
  }

  render() {
    return html`
      <div class="title">
        <svg class="logo" viewBox="0 0 25 25"><rect width="25" height="25" rx="2" fill="#e02020"/><path d="M24 1C15 3 8 8 4 16c5-3 8-3 11-2-4 2-6 5-7 9 7-3 12-10 16-22z" fill="#fff"/></svg>
        <span class="appname">通达信金融终端</span>
        <span class="menus">${menus.map((m) => html`<span class=${m === "发现" ? "dot" : ""}>${m}</span>`)}</span>
        <span class="login">交易未登录</span><span class="stock">安记食品</span>
        <span class="rmenus"><span>功能</span><span>版面</span><span>公式</span><span>选项</span><span>帮助</span></span>
        <span class="clock"><span>13:11:05</span><span>周二</span></span>
        <svg class="win" viewBox="0 0 155 33" fill="none" stroke="#333" stroke-width="3.4">
          <path d="M29 8l-8 8 8 8"/><path d="M54 16.5h14"/><path d="M92 13h14v13H92zM98 12V7h14v12h-5"/><path d="M130 8l14 15M144 8l-14 15"/>
        </svg>
      </div>
      <div class="main">
        <div class="left">
          <div class="tools">
            <span class="ibox"><span class="chip"></span></span>
            <span class="grp"><span>分时</span><span>1分钟</span><span>5分钟</span><span>15分钟</span><span>30分钟</span><span>60分钟</span><span class="on">日线</span></span>
            <span class="grp2"><span>周线</span><span>月线</span><span>多周期</span></span>
            <span class="more">更多 〉</span>
            <span class="spacer"></span>
            ${["复权","叠加","统计","画线","F10","标记","-自选","返回"].map((t) => html`<span class="tcell">${t}</span>`)}
          </div>
          <div class="info i1"><div class="cells">${this.cells(info1, 1710)}</div><div class="stub"></div></div>
          ${this.priceChart()}
          <div class="info i2"><div class="cells">${this.cells(info2, 1740)}</div><div class="stub"></div></div>
          ${this.volChart()}
          <div class="tl">
            ${timeline.map(([x, t, c], i) => html`<span class=${c} style="width:${(i + 1 < timeline.length ? timeline[i + 1][0] : 1787) - x}px">${t}</span>`)}
            ${tlTicks.map((x) => html`<i style="left:${x}px"></i>`)}
          </div>
          <div class="btns">
            ${btn1.map((t) => html`<span class=${t === "设置" ? "cy" : ""}>${t}</span>`)}
            <b class="spacer"></b>
            <span class="w1">模板</span><span class="w2"></span><span class="w3"></span>
          </div>
          <div class="btns">
            ${btn2.map(([t, c]) => html`<span class=${c}>${t}</span>`)}
            <b class="spacer"></b>
          </div>
        </div>
        ${this.panel()}
        ${this.side()}
      </div>
      <div class="statusbar">
        <span class="badge"></span>
        ${this.cells(status, 1262, 24)}
        <span class="tot">总成交 5</span>
      </div>
      <div class="wm">
        <span class="cn">公式指标网</span>
        <svg width="84" height="81" viewBox="0 0 84 81">
          <path d="M4 40A38 38 0 0 1 80 40" fill="none" stroke="#d0604e" stroke-width="8"/>
          <path d="M80 40A38 38 0 0 1 42 78" fill="none" stroke="#e8c848" stroke-width="10"/>
          <path d="M8 50A36 36 0 0 0 34 76" fill="none" stroke="#2060b0" stroke-width="2" stroke-dasharray="2 2"/>
          <circle cx="42" cy="10" r="6" fill="#e8c848"/>
          <path d="M26 18h32v18H48v6h10v10H48v29H36V52H26V42h10v-6H26z" fill="#e8c848"/>
          <path d="M30 24h24M30 30h24M36 47h12" stroke="#c87040" stroke-width="2"/>
        </svg>
        <span class="en">www.9m8.cn</span>
      </div>
    `;
  }
}
